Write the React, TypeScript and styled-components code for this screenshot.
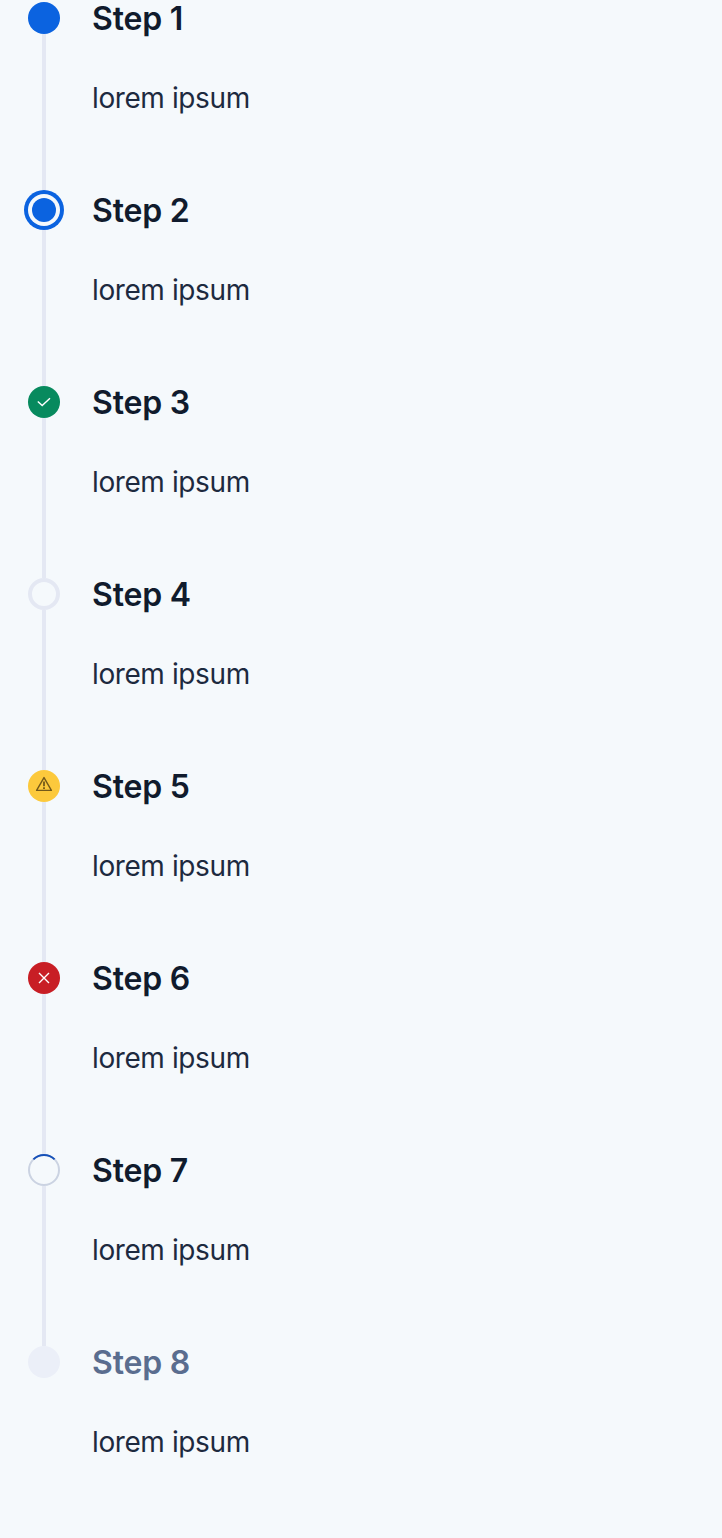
import React from 'react';
import styled, { createGlobalStyle } from 'styled-components';

type Status = 'default' | 'active' | 'success' | 'empty' | 'warning' | 'error' | 'loading' | 'disabled';

const Global = createGlobalStyle`
  body { margin: 0; background: #f5f9fc; font-family: Inter, "Liberation Sans", sans-serif; }
`;

const List = styled.ol`
  list-style: none;
  margin: 0;
  padding: 2px 0 0 24px;
  min-height: 1538px;
  box-sizing: border-box;
`;

const Item = styled.li`
  display: flex;
  gap: 28px;
  height: 192px;
`;

const Rail = styled.div`
  display: flex;
  flex-direction: column;
  align-items: center;
  width: 40px;
`;

const Line = styled.span<{ $inset: boolean }>`
  flex: 1;
  width: 4px;
  margin-top: ${({ $inset }) => ($inset ? '4px' : '0')};
  background: #e4e8f3;
`;

const fills: Record<Status, string> = {
  default: '#0b63e0',
  active: '#0b63e0',
  success: '#078a5e',
  empty: 'transparent',
  warning: '#fcc93c',
  error: '#c81e25',
  loading: 'transparent',
  disabled: '#ebeff8',
};

const Marker = styled.span<{ $status: Status }>`
  display: block;
  flex: none;
  box-sizing: border-box;
  width: 32px;
  height: 32px;
  border-radius: 50%;
  background: ${({ $status }) => fills[$status]};
  ${({ $status }) => $status === 'active' && `
    width: 24px;
    height: 24px;
    margin: 4px 0;
    box-shadow: 0 0 0 4px #f5f9fc, 0 0 0 8px #0b63e0;
  `}
  ${({ $status }) => $status === 'empty' && 'border: 4px solid #e4e8f3;'}
`;

const Icon = styled.svg`
  display: block;
  width: 32px;
  height: 32px;
  fill: none;
`;

const Content = styled.div`
  display: flex;
  flex-direction: column;
  gap: 39px;
`;

const Title = styled.h3<{ $muted: boolean }>`
  margin: -3px 0 0;
  font-size: 32px;
  line-height: 40px;
  font-weight: 600;
  letter-spacing: -0.18px;
  color: ${({ $muted }) => ($muted ? '#5a6d8f' : '#101b2d')};
`;

const Text = styled.p`
  margin: 0;
  font-size: 28px;
  line-height: 40px;
  letter-spacing: -0.4px;
  color: #1d2a3f;
`;

const Glyph = ({ status }: { status: Status }) => {
  if (status === 'success') return <Icon viewBox="0 0 32 32"><path d="M9.8 15.4l4.4 4.2 7.8-7.4" stroke="#fff" strokeWidth="1.4" /></Icon>;
  if (status === 'warning') return <Icon viewBox="0 0 32 32"><path d="M16 7.6L23.4 20.4H8.6z" stroke="#73591a" strokeWidth="1.4" strokeLinejoin="round" /><path d="M16 11.5v4.8M16 17.2v1.8" stroke="#73591a" strokeWidth="1.8" /></Icon>;
  if (status === 'error') return <Icon viewBox="0 0 32 32"><path d="M11 11l10 10M21 11l-10 10" stroke="#fff" strokeWidth="1.4" /></Icon>;
  if (status === 'loading') return <Icon viewBox="0 0 32 32"><circle cx="16" cy="16" r="15" stroke="#cbd3e2" strokeWidth="2" /><path d="M5.4 5.4A15 15 0 0 1 26.6 5.4" stroke="#1550b8" strokeWidth="2" /></Icon>;
  return null;
};

const statuses: Status[] = ['default', 'active', 'success', 'empty', 'warning', 'error', 'loading', 'disabled'];

export default function App() {
  return (
    <>
      <Global />
      <List>
        {statuses.map((status, i) => (
          <Item key={status}>
            <Rail>
              <Marker $status={status}><Glyph status={status} /></Marker>
              {i < statuses.length - 1 && <Line $inset={status === 'active'} />}
            </Rail>
            <Content>
              <Title $muted={status === 'disabled'}>Step {i + 1}</Title>
              <Text>lorem ipsum</Text>
            </Content>
          </Item>
        ))}
      </List>
    </>
  );
}
